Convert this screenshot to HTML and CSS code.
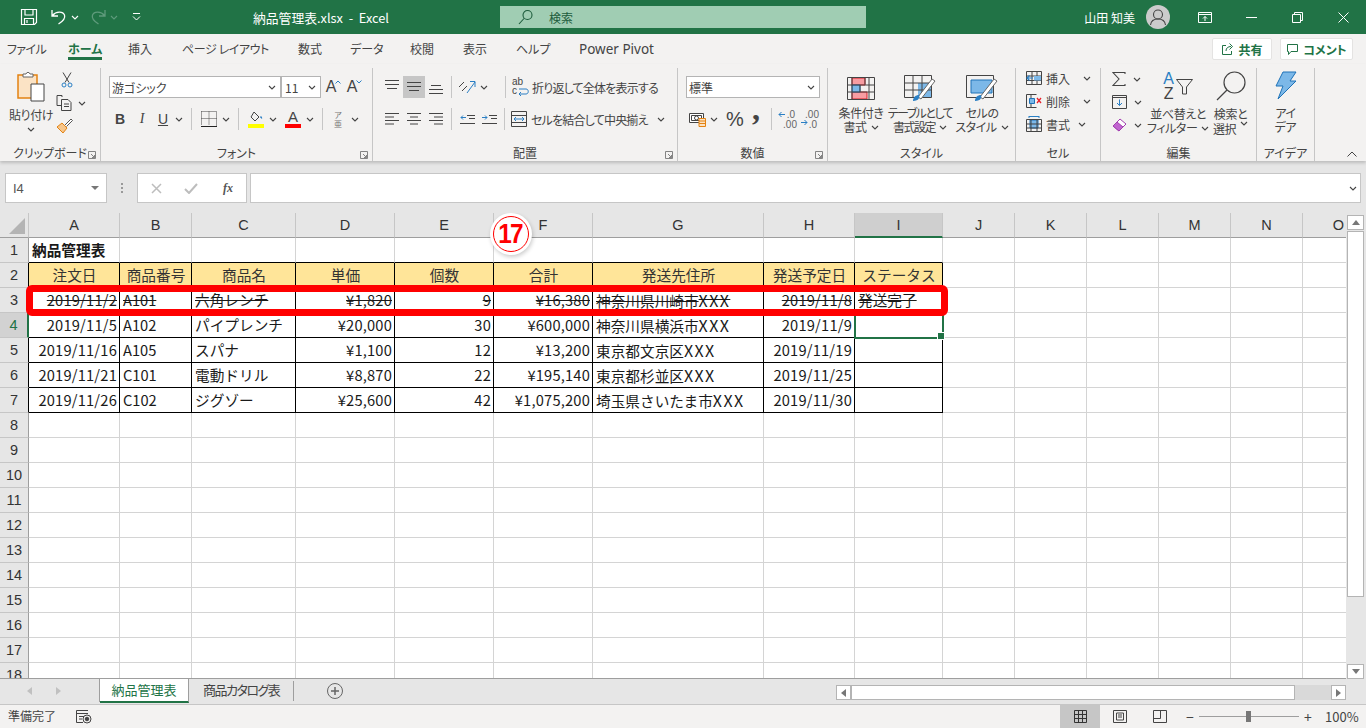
FILE: index.html
```html
<!DOCTYPE html>
<html lang="ja">
<head>
  <meta charset="UTF-8" />
  <title>納品管理表.xlsx - Excel</title>
  <link rel="stylesheet" href="styles.css">
</head>
<body>
  <svg class="sprite" width="0" height="0">
    <symbol id="chev" viewBox="0 0 8 5"><path d="M1 1l3 3 3-3" fill="none" stroke="currentColor" stroke-width="1.1"/></symbol>
    <symbol id="launch" viewBox="0 0 8 8"><path d="M.5 .5h7v7M.5 .5v7h7M3 3l3.500 3.500M6.500 4v2.500H4" fill="none" stroke="#777" stroke-width=".9"/></symbol>
  </svg>

  <header class="titlebar">
    <div class="qat">
      <svg class="q-save" width="18" height="18" viewBox="0 0 18 18" fill="none" stroke="#fff" stroke-width="1.200"><path d="M1.500 1.500h15v13l-2 2h-13zM5 1.500v5.500h8V1.500M4.500 16.500v-6h9v6M7 12v3"/></svg>
      <svg class="q-undo" width="18" height="18" viewBox="0 0 18 18" fill="none" stroke="#fff" stroke-width="1.300"><path d="M2 2v6h6M2.500 7.500C6 3 13 3 14.500 7c1 3-2 6.500-6 9"/></svg>
      <svg class="q-chev" width="8" height="5"><use href="#chev"/></svg>
      <svg class="q-redo" width="18" height="18" viewBox="0 0 18 18" fill="none" stroke="#5f9b7c" stroke-width="1.300"><path d="M16 2v6h-6M15.500 7.500C12 3 5 3 3.500 7c-1 3 2 6.500 6 9"/></svg>
      <svg class="q-chev dim" width="8" height="5"><use href="#chev"/></svg>
      <svg class="q-custom" width="9" height="8" viewBox="0 0 9 8" fill="none" stroke="#fff"><path d="M1 .5h7M1 3.500l3.500 3.500L8 3.500"/></svg>
    </div>
    <div class="doc-title">納品管理表.xlsx &nbsp;-&nbsp; Excel</div>
    <div class="search">
      <svg width="16" height="16" viewBox="0 0 16 16" fill="none" stroke="#1d5c3c" stroke-width="1.100"><circle cx="9.500" cy="6" r="4.500"/><path d="M6 9.500L1 15"/></svg>
      <span>検索</span>
    </div>
    <div class="account">
      <span class="user">山田 知美</span>
      <svg class="avatar" width="24" height="24" viewBox="0 0 24 24"><circle cx="12" cy="12" r="12" fill="#cbcbcb"/><circle cx="12" cy="9.500" r="4.500" fill="none" stroke="#444" stroke-width="1.100"/><path d="M4.500 20c.5-4 3.500-6 7.500-6s7 2 7.500 6" fill="none" stroke="#444" stroke-width="1.100"/></svg>
    </div>
    <div class="winbtns">
      <span class="wb"><svg width="14" height="11" viewBox="0 0 14 11" fill="none" stroke="#fff"><path d="M.5 .5h13v10H.5zM.5 2.500h13M7 9V4.500M5 6.500l2-2 2 2"/></svg></span>
      <span class="wb"><svg width="11" height="1"><rect width="11" height="1" fill="#fff"/></svg></span>
      <span class="wb"><svg width="11" height="11" viewBox="0 0 11 11" fill="none" stroke="#fff"><path d="M.5 2.500h8v8h-8zM2.500 2.500v-2h8v8h-2"/></svg></span>
      <span class="wb"><svg width="11" height="11" viewBox="0 0 11 11" fill="none" stroke="#fff"><path d="M.5 .5l10 10M10.500 .5l-10 10"/></svg></span>
    </div>
  </header>

  <nav class="tabs">
    <a class="t-file">ファイル</a>
    <a class="t-home on">ホーム</a>
    <a class="t-ins">挿入</a>
    <a class="t-page">ページ レイアウト</a>
    <a class="t-form">数式</a>
    <a class="t-data">データ</a>
    <a class="t-rev">校閲</a>
    <a class="t-view">表示</a>
    <a class="t-help">ヘルプ</a>
    <a class="t-pivot">Power Pivot</a>
    <div class="tab-actions">
      <button class="share"><svg width="13" height="13" viewBox="0 0 13 13" fill="none" stroke="#217346"><path d="M5 2.500H1.500v9h9V8M5 8c0-3 2-4.500 5-4.500M8.500 .5l3 3-3 3"/></svg>共有</button>
      <button class="comment"><svg width="13" height="13" viewBox="0 0 13 13" fill="none" stroke="#217346"><path d="M1.500 1.500h10v7H5l-2.500 3v-3h-1z"/></svg>コメント</button>
    </div>
  </nav>

  <div class="ribbon">
    <section class="grp g-clip">
      <div class="body clip">
        <div class="big paste">
          <svg width="28" height="30" viewBox="0 0 28 30"><path d="M1 3h19v23H1z" fill="#fbe3c5" stroke="#e48312" stroke-width="1.500"/><path d="M6 5V2h3l1-1.500h2L13 2h3v3z" fill="#fff" stroke="#666"/><path d="M14 12h13v17H14z" fill="#fff" stroke="#444"/></svg>
          <span>貼り付け</span>
          <svg class="chv" width="8" height="5"><use href="#chev"/></svg>
        </div>
        <div class="clip-tools">
          <svg width="12" height="16" viewBox="0 0 12 16" fill="none" stroke="#444"><path d="M2 .5l6 10M10 .5l-6 10"/><circle cx="3" cy="13" r="2" stroke="#2a7fc4"/><circle cx="9" cy="13" r="2" stroke="#2a7fc4"/></svg>
          <div class="row-tool"><svg width="17" height="16" viewBox="0 0 17 16" fill="none" stroke="#444"><path d="M6 2V.5H1v10h4M5.500 4.500H12l3 3v8H5.500zM8 9h5M8 11.500h5"/></svg><svg class="chv" width="8" height="5"><use href="#chev"/></svg></div>
          <svg width="17" height="16" viewBox="0 0 17 16"><path d="M1 9l6 6 4-5-5-5z" fill="#f6c68c" stroke="#e48312"/><path d="M9 7l6-6 1.500 1.500-6 6" fill="#fff" stroke="#555"/></svg>
        </div>
      </div>
      <div class="glabel">クリップボード</div>
      <svg class="launch" width="8" height="8"><use href="#launch"/></svg>
    </section>

    <section class="grp g-font">
      <div class="body col">
        <div class="trow">
          <div class="select font-name">游ゴシック<svg width="8" height="5"><use href="#chev"/></svg></div>
          <div class="select font-size">11<svg width="8" height="5"><use href="#chev"/></svg></div>
          <span class="grow">A<svg width="6" height="4" viewBox="0 0 6 4" fill="none" stroke="#2a7fc4"><path d="M.5 3.500L3 1l2.500 2.500"/></svg></span>
          <span class="grow">A<svg width="6" height="4" viewBox="0 0 6 4" fill="none" stroke="#2a7fc4"><path d="M.5 .5L3 3l2.500-2.500"/></svg></span>
        </div>
        <div class="trow">
          <span class="tb"><b class="fb">B</b></span>
          <span class="tb"><i class="fi">I</i></span>
          <span class="tb nw"><u class="fu">U</u></span>
          <svg class="cv" width="8" height="5"><use href="#chev"/></svg>
          <span class="sep"></span>
          <span class="tb bump2"><svg width="16" height="16" viewBox="0 0 16 16" fill="none"><path d="M.5 .5h15v14M.5 .5v14M8 .5v14M.5 7.500h15" stroke="#444" stroke-dasharray="1 1"/><path d="M0 15.500h16" stroke="#222"/></svg></span>
          <svg class="cv" width="8" height="5"><use href="#chev"/></svg>
          <span class="sep"></span>
          <span class="tb bump2"><svg width="16" height="17" viewBox="0 0 16 17" fill="none"><path d="M6 1l5 5-4 4-4-4z" stroke="#444"/><path d="M13 5c1 1 1.500 2 1 3-.5-1-2-1-2-2" fill="#2a7fc4"/><rect y="13" width="16" height="4" fill="#ff0"/></svg></span>
          <svg class="cv" width="8" height="5"><use href="#chev"/></svg>
          <span class="tb color bump1"><span class="fa">A</span><em></em></span>
          <svg class="cv" width="8" height="5"><use href="#chev"/></svg>
          <span class="sep"></span>
          <span class="tb"><span class="phon">ア<br>亜</span></span>
          <svg class="cv" width="8" height="5"><use href="#chev"/></svg>
        </div>
      </div>
      <div class="glabel">フォント</div>
      <svg class="launch" width="8" height="8"><use href="#launch"/></svg>
    </section>

    <section class="grp g-align">
      <div class="body col">
        <div class="trow">
          <span class="tb"><svg width="14" height="14" viewBox="0 0 14 14" stroke="#444"><path d="M0 .5h14M0 4.500h14M2 8.500h10"/></svg></span>
          <span class="tb act"><svg width="14" height="14" viewBox="0 0 14 14" stroke="#444"><path d="M0 2.500h14M0 6.500h14M2 10.500h10"/></svg></span>
          <span class="tb"><svg width="14" height="14" viewBox="0 0 14 14" stroke="#444"><path d="M2 5.500h10M0 9.500h14M0 13.500h14"/></svg></span>
          <span class="sep"></span>
          <span class="tb"><svg width="18" height="16" viewBox="0 0 18 16" fill="none"><path d="M1 8l5-5M4 12l5-5" stroke="#444"/><path d="M9 14L17 3M12 2.500h5V8" stroke="#2a7fc4"/></svg></span>
          <svg class="cv" width="8" height="5"><use href="#chev"/></svg>
          <span class="sep far"></span>
          <span class="wide"><svg width="20" height="20" viewBox="0 0 20 20" fill="none"><text x="2" y="8" font-size="10" fill="#444" font-family="Liberation Sans">ab</text><text x="2" y="17" font-size="10" fill="#444" font-family="Liberation Sans">c</text><path d="M9 12h7c3 0 3 5 0 5H9M11 15l-2 2 2 2" stroke="#2a7fc4"/></svg></span>
          <span class="cmd">折り返して全体を表示する</span>
        </div>
        <div class="trow">
          <span class="tb"><svg width="14" height="12" viewBox="0 0 14 12" stroke="#444"><path d="M0 .5h14M0 4h9M0 7.500h14M0 11h9"/></svg></span>
          <span class="tb"><svg width="14" height="12" viewBox="0 0 14 12" stroke="#444"><path d="M0 .5h14M3 4h8M0 7.500h14M3 11h8"/></svg></span>
          <span class="tb"><svg width="14" height="12" viewBox="0 0 14 12" stroke="#444"><path d="M0 .5h14M5 4h9M0 7.500h14M5 11h9"/></svg></span>
          <span class="sep"></span>
          <span class="tb"><svg width="15" height="12" viewBox="0 0 15 12" fill="none"><path d="M7 2.500h8M9 5.500h6M0 10.500h15" stroke="#444"/><path d="M6 4.500H1M3 2.500l-2 2 2 2" stroke="#2a7fc4"/></svg></span>
          <span class="tb"><svg width="15" height="12" viewBox="0 0 15 12" fill="none"><path d="M7 2.500h8M9 5.500h6M0 10.500h15" stroke="#444"/><path d="M0 4.500h5M3 2.500l2 2-2 2" stroke="#2a7fc4"/></svg></span>
          <span class="sep"></span>
          <span class="wide merge"><svg width="16" height="16" viewBox="0 0 16 16" fill="none"><path d="M.5 .5h15v15H.5zM.5 4.500h15M.5 11.500h15" stroke="#444"/><path d="M3 8h10M5 6L3 8l2 2M11 6l2 2-2 2" stroke="#2a7fc4"/></svg></span>
          <span class="cmd">セルを結合して中央揃え</span>
          <svg class="cv merge-cv" width="8" height="5"><use href="#chev"/></svg>
        </div>
      </div>
      <div class="glabel">配置</div>
      <svg class="launch" width="8" height="8"><use href="#launch"/></svg>
    </section>

    <section class="grp g-num">
      <div class="body col">
        <div class="trow">
          <div class="select num-format">標準<svg width="8" height="5"><use href="#chev"/></svg></div>
        </div>
        <div class="trow">
          <span class="tb"><svg width="17" height="15" viewBox="0 0 17 15"><path d="M.5 1.500h14v9H.5zM2.500 3.500h10v5h-10z" fill="#fff" stroke="#444"/><circle cx="7.500" cy="6" r="2" fill="none" stroke="#444"/><path d="M10 6.500h6.500v8H10z" fill="#fbe3c5" stroke="#e48312"/><path d="M10 9h6.500M10 11.500h6.500" stroke="#e48312"/></svg></span>
          <svg class="cv" width="8" height="5"><use href="#chev"/></svg>
          <span class="pct">%</span>
          <span class="comma">,</span>
          <span class="sep"></span>
          <span class="tb dec"><svg width="18" height="16" viewBox="0 0 18 16" fill="none"><path d="M7 3.500H1M3.500 1L1 3.500 3.500 6" stroke="#2a7fc4"/></svg><small class="d1">.0</small><small class="d2">.00</small></span>
          <span class="tb dec"><svg width="18" height="16" viewBox="0 0 18 16" fill="none"><path d="M1 11.500h6M4.500 9L7 11.500 4.500 14" stroke="#2a7fc4"/></svg><small class="d3">.00</small><small class="d4">.0</small></span>
        </div>
      </div>
      <div class="glabel">数値</div>
      <svg class="launch" width="8" height="8"><use href="#launch"/></svg>
    </section>

    <section class="grp g-style">
      <div class="body styles">
        <div class="big s1">
          <svg width="28" height="23" viewBox="0 0 28 23"><path d="M5 1h13v7H5zM5 15h15v7H5z" fill="#f79da2" stroke="#d9202a"/><path d="M5 8h8v7H5z" fill="#7cb8e8" stroke="#1e72b8"/><path d="M.5 .5h27v22H.5zM.5 8h27M.5 15h27M5 .5v22M13 8v7M18 .5v7M22 .5v22" fill="none" stroke="#444"/></svg>
          <span>条件付き<br>書式<svg class="chv-in" width="8" height="5"><use href="#chev"/></svg></span>
        </div>
        <div class="big s2">
          <svg width="32" height="27" viewBox="0 0 32 27"><path d="M14 8h14v14H14z" fill="#7cb8e8"/><path d="M.5 .5h27v22H.5zM.5 8h27M.5 15h27M9 .5v22M18 .5v22" fill="none" stroke="#444"/><path d="M14 22l14-18 3 2-14 18z" fill="#fff" stroke="#666"/><path d="M9 26c0-4 3-6 6-6 1 2 0 6-6 6z" fill="#2a7fc4"/></svg>
          <span class="tight">テーブルとして<br>書式設定<svg class="chv-in" width="8" height="5"><use href="#chev"/></svg></span>
        </div>
        <div class="big s3">
          <svg width="32" height="27" viewBox="0 0 32 27"><path d="M5 5h21v13H5z" fill="#7cb8e8" stroke="#1e72b8"/><path d="M.5 .5h27v22H.5z" fill="none" stroke="#444"/><path d="M14 22l14-18 3 2-14 18z" fill="#fff" stroke="#666"/><path d="M9 26c0-4 3-6 6-6 1 2 0 6-6 6z" fill="#2a7fc4"/></svg>
          <span>セルの<br>スタイル<svg class="chv-in" width="8" height="5"><use href="#chev"/></svg></span>
        </div>
      </div>
      <div class="glabel">スタイル</div>
    </section>

    <section class="grp g-cell">
      <div class="body col cells">
        <div class="cellrow"><svg width="16" height="14" viewBox="0 0 16 14"><path d="M.5 .5h15v13H.5zM.5 5h15M.5 9.500h15M6 .5v13M11 .5v13" fill="none" stroke="#444"/><path d="M8 5h7v4.500H8z" fill="#7cb8e8"/><path d="M7 7H1M3.500 4.500L1 7l2.500 2.500" fill="none" stroke="#2a7fc4" stroke-width="1.200"/></svg><span>挿入</span><svg class="cv c-end" width="8" height="5"><use href="#chev"/></svg></div>
        <div class="cellrow"><svg width="16" height="14" viewBox="0 0 16 14"><path d="M.5 .5h10M.5 13.500h10M.5 .5v13M5 .5v4M5 9v4.500" fill="none" stroke="#444"/><path d="M3.500 4.500h5v5h-5z" fill="#7cb8e8" stroke="#1e72b8"/><path d="M11 4l4 5M15 4l-4 5" stroke="#e8202a" stroke-width="1.300"/></svg><span>削除</span><svg class="cv c-end" width="8" height="5"><use href="#chev"/></svg></div>
        <div class="cellrow"><svg width="16" height="16" viewBox="0 0 16 16"><path d="M4 4h8v8H4z" fill="#7cb8e8" stroke="#1e72b8"/><path d="M.5 3.500h15v12H.5zM.5 8h15M.5 12h15M5 3.500v12M11 3.500v12" fill="none" stroke="#444"/><path d="M3 .5h10M3 0v2M13 0v2" stroke="#2a7fc4"/></svg><span>書式</span><svg class="cv c-end2" width="8" height="5"><use href="#chev"/></svg></div>
      </div>
      <div class="glabel">セル</div>
    </section>

    <section class="grp g-edit">
      <div class="body editing">
        <div class="col edit-tools">
          <div class="etool"><svg width="14" height="14" viewBox="0 0 14 14" fill="none" stroke="#444" stroke-width="1.100"><path d="M13 2V.5H1l6 6.500-6 6.500h12V12"/></svg><svg class="cv" width="8" height="5"><use href="#chev"/></svg></div>
          <div class="etool"><svg width="15" height="14" viewBox="0 0 15 14" fill="none"><path d="M.5 .5h14v13H.5zM.5 2.500h14" stroke="#444"/><path d="M7.500 4.500v6M5 8l2.500 2.500L10 8" stroke="#2a7fc4"/></svg><svg class="cv" width="8" height="5"><use href="#chev"/></svg></div>
          <div class="etool"><svg width="15" height="14" viewBox="0 0 15 14"><path d="M1 8l7-7 6 5-7 7z" fill="#fff" stroke="#a23fb0"/><path d="M1 8l4-4 6 5-4 4z" fill="#c065cf" stroke="#a23fb0"/></svg><svg class="cv" width="8" height="5"><use href="#chev"/></svg></div>
        </div>
        <div class="big sort">
          <div class="sort-ic"><div class="az"><em>A</em><b>Z</b></div><svg width="17" height="16" viewBox="0 0 17 16" fill="none" stroke="#444"><path d="M.5 .5h16L10.500 8v7h-4V8z"/></svg></div>
          <span>並べ替えと<br>フィルター<svg class="chv-in" width="8" height="5"><use href="#chev"/></svg></span>
        </div>
        <div class="big find">
          <svg width="30" height="30" viewBox="0 0 30 30" fill="none" stroke="#444" stroke-width="1.200"><circle cx="18.500" cy="11.500" r="10.500"/><path d="M11 19L1 29"/></svg>
          <span>検索と<br>選択<svg class="chv-in" width="8" height="5"><use href="#chev"/></svg></span>
        </div>
      </div>
      <div class="glabel">編集</div>
    </section>

    <section class="grp g-idea">
      <div class="body">
        <div class="big">
          <svg width="22" height="29" viewBox="0 0 22 29"><path d="M8 1h13l-6 9h6L3 28l5-13H1z" fill="#7cb8e8" stroke="#1e72b8"/></svg>
          <span>アイ<br>デア</span>
        </div>
      </div>
      <div class="glabel">アイデア</div>
    </section>

    <svg class="collapse" width="10" height="6" viewBox="0 0 10 6" fill="none" stroke="#444"><path d="M.5 5.500L5 1l4.500 4.500"/></svg>
  </div>

  <div class="fbar">
    <div class="namebox">I4<span class="tri"></span></div>
    <span class="dots"></span>
    <div class="fbtns">
      <svg width="11" height="11" viewBox="0 0 11 11" stroke="#bdbdbd" stroke-width="1.500"><path d="M1 1l9 9M10 1l-9 9"/></svg>
      <svg width="14" height="11" viewBox="0 0 14 11" fill="none" stroke="#bdbdbd" stroke-width="2"><path d="M1 6l4 4 8-9"/></svg>
      <i class="fx">fx</i>
    </div>
    <div class="finput"><svg width="8" height="5"><use href="#chev"/></svg></div>
  </div>

  <main class="sheetarea">
    <div class="sheet">
      <table class="cells-table">
        <colgroup>
          <col class="c-h"><col class="c-a"><col class="c-b"><col class="c-c"><col class="c-d"><col class="c-e"><col class="c-f"><col class="c-g"><col class="c-hh"><col class="c-i"><col class="c-n"><col class="c-n"><col class="c-n"><col class="c-n"><col class="c-n"><col class="c-n">
        </colgroup>
        <tr class="colhead">
          <th class="corner"><span></span></th><th>A</th><th>B</th><th>C</th><th>D</th><th>E</th><th>F</th><th>G</th><th>H</th><th class="cur">I</th><th>J</th><th>K</th><th>L</th><th>M</th><th>N</th><th>O</th>
        </tr>
        <tr class="above">
          <th>1</th><td class="title">納品管理表</td><td></td><td></td><td></td><td></td><td></td><td></td><td></td><td></td><td class="free"></td><td class="free"></td><td class="free"></td><td class="free"></td><td class="free"></td><td class="free"></td>
        </tr>
        <tr class="ledger heads">
          <th>2</th><td>注文日</td><td>商品番号</td><td>商品名</td><td>単価</td><td>個数</td><td>合計</td><td>発送先住所</td><td>発送予定日</td><td>ステータス</td><td class="free"></td><td class="free"></td><td class="free"></td><td class="free"></td><td class="free"></td><td class="free"></td>
        </tr>
        <tr class="ledger done">
          <th>3</th><td class="r"><s>2019/11/2</s></td><td><s>A101</s></td><td><s>六角レンチ</s></td><td class="r"><s>¥1,820</s></td><td class="r"><s>9</s></td><td class="r"><s>¥16,380</s></td><td><s>神奈川県川崎市<span class="xs">XXX</span></s></td><td class="r"><s>2019/11/8</s></td><td><s>発送完了</s></td><td class="free"></td><td class="free"></td><td class="free"></td><td class="free"></td><td class="free"></td><td class="free"></td>
        </tr>
        <tr class="ledger">
          <th class="cur">4</th><td class="r">2019/11/5</td><td>A102</td><td>パイプレンチ</td><td class="r">¥20,000</td><td class="r">30</td><td class="r">¥600,000</td><td>神奈川県横浜市<span class="xs">XXX</span></td><td class="r">2019/11/9</td><td class="sel"></td><td class="free"></td><td class="free"></td><td class="free"></td><td class="free"></td><td class="free"></td><td class="free"></td>
        </tr>
        <tr class="ledger">
          <th>5</th><td class="r">2019/11/16</td><td>A105</td><td>スパナ</td><td class="r">¥1,100</td><td class="r">12</td><td class="r">¥13,200</td><td>東京都文京区<span class="xs">XXX</span></td><td class="r">2019/11/19</td><td></td><td class="free"></td><td class="free"></td><td class="free"></td><td class="free"></td><td class="free"></td><td class="free"></td>
        </tr>
        <tr class="ledger">
          <th>6</th><td class="r">2019/11/21</td><td>C101</td><td>電動ドリル</td><td class="r">¥8,870</td><td class="r">22</td><td class="r">¥195,140</td><td>東京都杉並区<span class="xs">XXX</span></td><td class="r">2019/11/25</td><td></td><td class="free"></td><td class="free"></td><td class="free"></td><td class="free"></td><td class="free"></td><td class="free"></td>
        </tr>
        <tr class="ledger">
          <th>7</th><td class="r">2019/11/26</td><td>C102</td><td>ジグゾー</td><td class="r">¥25,600</td><td class="r">42</td><td class="r">¥1,075,200</td><td>埼玉県さいたま市<span class="xs">XXX</span></td><td class="r">2019/11/30</td><td></td><td class="free"></td><td class="free"></td><td class="free"></td><td class="free"></td><td class="free"></td><td class="free"></td>
        </tr>
        <tr><th>8</th><td></td><td></td><td></td><td></td><td></td><td></td><td></td><td></td><td></td><td></td><td></td><td></td><td></td><td></td><td></td></tr>
        <tr><th>9</th><td></td><td></td><td></td><td></td><td></td><td></td><td></td><td></td><td></td><td></td><td></td><td></td><td></td><td></td><td></td></tr>
        <tr><th>10</th><td></td><td></td><td></td><td></td><td></td><td></td><td></td><td></td><td></td><td></td><td></td><td></td><td></td><td></td><td></td></tr>
        <tr><th>11</th><td></td><td></td><td></td><td></td><td></td><td></td><td></td><td></td><td></td><td></td><td></td><td></td><td></td><td></td><td></td></tr>
        <tr><th>12</th><td></td><td></td><td></td><td></td><td></td><td></td><td></td><td></td><td></td><td></td><td></td><td></td><td></td><td></td><td></td></tr>
        <tr><th>13</th><td></td><td></td><td></td><td></td><td></td><td></td><td></td><td></td><td></td><td></td><td></td><td></td><td></td><td></td><td></td></tr>
        <tr><th>14</th><td></td><td></td><td></td><td></td><td></td><td></td><td></td><td></td><td></td><td></td><td></td><td></td><td></td><td></td><td></td></tr>
        <tr><th>15</th><td></td><td></td><td></td><td></td><td></td><td></td><td></td><td></td><td></td><td></td><td></td><td></td><td></td><td></td><td></td></tr>
        <tr><th>16</th><td></td><td></td><td></td><td></td><td></td><td></td><td></td><td></td><td></td><td></td><td></td><td></td><td></td><td></td><td></td></tr>
        <tr><th>17</th><td></td><td></td><td></td><td></td><td></td><td></td><td></td><td></td><td></td><td></td><td></td><td></td><td></td><td></td><td></td></tr>
        <tr><th>18</th><td></td><td></td><td></td><td></td><td></td><td></td><td></td><td></td><td></td><td></td><td></td><td></td><td></td><td></td><td></td></tr>
      </table>
      <div class="callout-frame"></div>
      <div class="callout-num"><span>17</span></div>
    </div>
    <div class="vscroll">
      <span class="sb-btn"><span class="up"></span></span>
      <span class="vthumb"></span>
      <span class="sb-btn"><span class="down"></span></span>
    </div>
  </main>

  <div class="sheetbar">
    <div class="sheet-nav"><span class="lt"></span><span class="rt"></span></div>
    <div class="stab on">納品管理表</div>
    <div class="stab next">商品カタログ表</div>
    <span class="stab-sep"></span>
    <svg class="addsheet" width="16" height="16" viewBox="0 0 16 16" fill="none" stroke="#666"><circle cx="8" cy="8" r="7.500"/><path d="M8 4v8M4 8h8" stroke-width="1.500"/></svg>
    <div class="hscroll">
      <span class="grip"></span>
      <span class="sb-btn"><span class="lt dark"></span></span>
      <span class="hthumb"></span>
      <span class="sb-btn"><span class="rt dark"></span></span>
    </div>
  </div>

  <footer class="status">
    <span>準備完了</span>
    <svg class="macro" width="16" height="14" viewBox="0 0 16 14" fill="none" stroke="#444"><path d="M12 .5H.5v12H7M.5 3.500H12M3 6.500h5M3 9h3"/><circle cx="11" cy="9" r="4"/><circle cx="11" cy="9" r="1.800" fill="#444"/></svg>
    <div class="views">
      <span class="view act"><svg width="13" height="13" viewBox="0 0 13 13" fill="none" stroke="#333"><path d="M.5 .5h12v12H.5zM.5 4.500h12M.5 8.500h12M4.500 .5v12M8.500 .5v12"/></svg></span>
      <span class="view"><svg width="14" height="13" viewBox="0 0 14 13" fill="none" stroke="#444"><path d="M.5 .5h13v12H.5zM3.500 3h7v7h-7zM5 5h4M5 7h4"/></svg></span>
      <span class="view"><svg width="14" height="13" viewBox="0 0 14 13" fill="none" stroke="#444"><path d="M.5 .5h13v12H.5zM.5 8.500h7V.5"/></svg></span>
    </div>
    <div class="zoom">
      <span class="zm">−</span>
      <span class="slider"><span></span></span>
      <span class="zm">+</span>
      <span class="pctv">100%</span>
    </div>
  </footer>
</body>
</html>
```

FILE: styles.css
```css
* { box-sizing: border-box; }
html, body { margin: 0; height: 100%; }
body {
  width: 1366px;
  height: 728px;
  overflow: hidden;
  display: flex;
  flex-direction: column;
  font-family: "Noto Sans CJK JP", "Noto Sans", sans-serif;
  font-feature-settings: "palt";
  font-size: 12px;
  color: #444;
  background: #e6e6e6;
}
.sprite { position: absolute; }

/* title bar */
.titlebar {
  height: 34px;
  flex: none;
  display: flex;
  align-items: center;
  background: #217346;
  color: #fff;
}
.qat { width: 253px; flex: none; display: flex; align-items: center; padding-left: 20px; }
.q-undo { margin-left: 12px; }
.q-chev { margin-left: 3px; }
.q-chev.dim { color: #5f9b7c; }
.q-redo { margin-left: 10px; }
.q-custom { margin-left: 14px; }
.doc-title { width: 247px; flex: none; font-size: 12.800px; }
.search {
  width: 366px;
  height: 22px;
  flex: none;
  display: flex;
  align-items: center;
  gap: 15px;
  padding-left: 18px;
  background: #a0cdb3;
  color: #1d5c3c;
}
.account { display: flex; align-items: center; margin-left: auto; }
.user { margin-right: 11px; }
.avatar { margin-right: 12px; }
.winbtns { display: flex; }
.wb { width: 46px; display: flex; align-items: center; justify-content: center; }

/* tabs */
.tabs {
  height: 30px;
  flex: none;
  display: flex;
  align-items: center;
  padding: 0 13px 0 7px;
  background: #f3f2f1;
  color: #444;
  font-size: 12px;
}
.tabs a { position: relative; white-space: nowrap; margin-top: -1px; }
.t-file { letter-spacing: -.6px; width: 61px; }
.t-home { width: 34px; margin-right: 26px; }
.t-ins { width: 54px; }
.t-page { width: 116px; letter-spacing: -.4px; }
.t-form { width: 52px; }
.t-data { width: 60px; }
.t-rev { width: 53px; }
.t-view { width: 53px; }
.t-help { width: 63px; }
.t-pivot { font-size: 13.500px; font-family: "Noto Sans", sans-serif; }
.tabs a.on { color: #217346; font-weight: 700; }
.tabs a.on::after {
  content: "";
  position: absolute;
  left: 0;
  right: 0;
  bottom: -3px;
  height: 3px;
  background: #217346;
}
.tab-actions { margin-left: auto; display: flex; gap: 8px; }
.tab-actions button {
  height: 22px;
  display: flex;
  align-items: center;
  justify-content: center;
  gap: 4px;
  border: 1px solid #e4e3e2;
  border-radius: 2px;
  background: #fff;
  color: #217346;
  font: 700 12px "Noto Sans CJK JP", sans-serif;
  font-feature-settings: "palt";
  padding: 0;
}
.share { width: 60px; }
.comment { width: 73px; }

/* ribbon */
.ribbon {
  height: 97px;
  flex: none;
  position: relative;
  z-index: 2;
  display: flex;
  background: #f3f2f1;
  box-shadow: 0 2px 3px rgba(0, 0, 0, 0.18);
}
.grp {
  flex: none;
  position: relative;
  display: flex;
  flex-direction: column;
  border-right: 1px solid #c6c6c6;
  height: 93px;
  margin-top: 4px;
}
.g-clip { width: 101px; }
.g-font { width: 272px; }
.g-align { width: 305px; }
.g-num { width: 150px; }
.g-style { width: 188px; }
.g-cell { width: 85px; }
.g-edit { width: 156px; }
.g-idea { width: 58px; }
.body { flex: 1; min-height: 0; }
.glabel { height: 16px; line-height: 15px; text-align: center; font-size: 12px; white-space: nowrap; }
.launch { position: absolute; right: 4px; bottom: 2px; }
.col { display: flex; flex-direction: column; }
.trow { display: flex; align-items: center; height: 22px; }
.g-font .body, .g-align .body, .g-num .body { padding: 8px 0 0 8px; gap: 10px; }
.tb { width: 22px; height: 22px; flex: none; display: flex; align-items: center; justify-content: center; position: relative; }
.tb.act { background: #c6c6c6; }
.tb.nw { width: 20px; }
.bump2 { margin-left: 2px; }
.bump1 { margin-left: 1px; }
.cv { flex: none; width: 8px; height: 5px; margin: 0 4px 0 2px; }
.sep { width: 1px; height: 22px; flex: none; background: #c6c6c6; margin: 0 4px; }
.sep.far { margin-left: 13px; }
.select {
  height: 22px;
  display: flex;
  align-items: center;
  justify-content: space-between;
  padding: 0 4px 0 2px;
  border: 1px solid #b4b4b4;
  background: #fff;
  color: #444;
}
.font-name { width: 172px; }
.font-size { width: 40px; margin-right: 0; padding-left: 3px; }
.num-format { width: 134px; }
.grow { position: relative; width: 22px; text-align: center; font: 16px/22px "Liberation Sans", sans-serif; margin-left: -1px; }
.grow svg { position: absolute; top: 4px; right: 1px; }
.fb { font: 700 14px "Liberation Sans", sans-serif; }
.fi { font: italic 14px "Liberation Serif", serif; }
.fu { font: 14px "Liberation Sans", sans-serif; }
.fa { font: 15px/15px "Liberation Sans", sans-serif; margin-top: -5px; }
.color em { position: absolute; left: 3px; right: 3px; bottom: 2px; height: 4px; background: #f00; }
.phon { font-size: 8px; line-height: 9px; text-align: center; color: #777; }
.cmd { white-space: nowrap; letter-spacing: -.8px; }
.wide { width: 20px; flex: none; display: flex; margin-right: 2px; }
.wide.merge { padding-left: 2px; }
.merge-cv { margin-left: 9px; }
.pct { width: 20px; font: 20px "Liberation Sans", sans-serif; text-align: center; margin-left: 3px; }
.comma { width: 20px; height: 22px; margin: 0 1px; font: 700 32px/2px "Liberation Serif", serif; text-align: center; }
.dec small { position: absolute; font: 10px "Liberation Sans", sans-serif; color: #666; }
.d1 { right: 3px; top: 1px; }
.d2 { right: 1px; bottom: 0; }
.d3 { right: 1px; top: 1px; }
.d4 { right: 3px; bottom: 0; }

.big {
  display: flex;
  flex-direction: column;
  align-items: center;
  text-align: center;
  line-height: 14px;
  white-space: nowrap;
}
.big span { display: block; letter-spacing: -.4px; }
.big span.tight { letter-spacing: -1.500px; }
.chv { width: 8px; height: 5px; }
.chv-in { width: 8px; height: 5px; margin-left: 4px; vertical-align: 2px; }
.clip { display: flex; padding: 4px 0 0 10px; }
.paste { width: 42px; }
.paste span { margin-top: 6px; }
.paste .chv { margin-top: 5px; }
.clip-tools { margin-left: 7px; padding-top: 0; display: flex; flex-direction: column; gap: 7px; align-items: flex-start; }
.row-tool { display: flex; align-items: center; gap: 5px; margin-left: -3px; }
.clip-tools > svg:first-child { margin-left: 2px; }
.clip-tools > svg:last-child { margin-left: -3px; }

.styles { display: flex; gap: 4px; padding: 7px 0 0 10px; }
.styles .big { height: 70px; justify-content: flex-start; }
.s1 { width: 46px; }
.s2 { width: 64px; }
.s3 { width: 52px; }
.styles .big svg:first-child { height: 27px; margin-bottom: 4px; }
.cells { padding: 1px 0 0 10px; gap: 5px; }
.cellrow { display: flex; align-items: center; height: 18px; gap: 4px; }
.cellrow .cv { margin-left: 9px; }
.cellrow .c-end2 { margin-left: 4px; }
.editing { display: flex; padding: 3px 0 0 11px; }
.edit-tools { width: 40px; gap: 7px; }
.etool { display: flex; align-items: center; gap: 5px; height: 16px; }
.sort { width: 54px; }
.find { width: 52px; }
.sort-ic { display: flex; align-items: flex-start; height: 33px; margin-bottom: 3px; gap: 2px; }
.az { display: flex; flex-direction: column; font: 16px/15px "Liberation Sans", sans-serif; }
.az em { font-style: normal; color: #2a7fc4; }
.az b { font-weight: 400; }
.sort-ic svg { margin-top: 8px; }
.find svg { margin-bottom: 6px; }
.g-idea .body { display: flex; justify-content: center; padding-top: 3px; }
.g-idea .big svg { margin-bottom: 6px; }
.collapse { position: absolute; right: 9px; bottom: 4px; }

/* formula bar */
.fbar {
  height: 52px;
  flex: none;
  display: flex;
  align-items: flex-start;
  padding: 12px 5px 0;
  background: #e6e6e6;
}
.namebox, .fbtns, .finput { height: 30px; background: #fff; border: 1px solid #c6c6c6; }
.namebox { width: 102px; display: flex; align-items: center; justify-content: space-between; padding: 0 7px; font: 13px "Liberation Sans", sans-serif; color: #555; }
.tri { border: 4px solid transparent; border-top: 4px solid #777; border-bottom: 0; }
.dots { width: 2px; height: 10px; margin: 10px 14px 0 14px; background: repeating-linear-gradient(#999 0 2px, transparent 2px 4px); }
.fbtns { width: 110px; display: flex; align-items: center; gap: 22px; padding-left: 13px; margin-right: 3px; }
.fx { font: italic 700 12px "Liberation Serif", serif; color: #555; margin-left: 3px; }
.finput { flex: 1; display: flex; align-items: center; justify-content: flex-end; padding-right: 3px; }

/* sheet */
.sheetarea { height: 466px; flex: none; display: flex; }
.sheet { width: 1346px; flex: none; position: relative; overflow: hidden; background: #fff; border-bottom: 1px solid #9e9e9e; }
.cells-table { table-layout: fixed; width: 1375px; border-collapse: separate; border-spacing: 0; font-size: 14.670px; color: #1a1a1a; font-feature-settings: normal; }
.c-h { width: 29px; }
.c-a { width: 91px; }
.c-b { width: 72px; }
.c-c { width: 104px; }
.c-d, .c-e, .c-f { width: 99px; }
.c-g { width: 171px; }
.c-hh { width: 91px; }
.c-i { width: 88px; }
.c-n { width: 72px; }
tr { height: 25px; }
td, th { padding: 0; overflow: hidden; white-space: nowrap; font-weight: 400; }
td { padding: 0 2px 0 3px; border-right: 1px solid #d4d4d4; border-bottom: 1px solid #d4d4d4; line-height: 22px; }
th { background: #e6e6e6; border-right: 1px solid #9e9e9e; border-bottom: 1px solid #c6c6c6; color: #333; font: 14.500px "Liberation Sans", sans-serif; }
.colhead th { border-right-color: #c6c6c6; border-bottom-color: #9e9e9e; }
.corner { position: relative; }
.corner span { position: absolute; right: 3px; bottom: 3px; border: 8px solid transparent; border-right-color: #b4b4b4; border-bottom-color: #b4b4b4; }
.title { font-weight: 700; }
.above td { border-bottom-color: #000; }
.above td.free { border-bottom-color: #d4d4d4; }
.ledger td { border-color: #000; }
.ledger td.free { border-color: #d4d4d4; }
.ledger th { border-right-color: #000; }
.heads td { background: #ffe599; text-align: center; color: #333; }
.heads td.free { background: #fff; }
.r { text-align: right; letter-spacing: .2px; }
.xs { font-size: 16px; letter-spacing: 1.400px; }
th.cur { background: #d2d2d2; color: #217346; border-right: 2px solid #217346; }
.ledger th.cur { border-right-color: #217346; }
.colhead th.cur { background: #cfcfcf; color: #333; border-right: 1px solid #c6c6c6; border-bottom: 2px solid #217346; }
.sel { position: relative; overflow: visible; outline: 2px solid #217346; outline-offset: -1px; }
.sel::after { content: ""; position: absolute; right: -3px; bottom: -3px; width: 6px; height: 6px; background: #217346; border: 1px solid #fff; }
s { text-decoration-thickness: 1px; }

/* callouts over the grid */
.callout-frame {
  position: absolute;
  left: 26px;
  top: 72px;
  width: 922px;
  height: 31px;
  border: 7px solid #f00;
  border-radius: 6px;
}
.callout-num {
  position: absolute;
  left: 493px;
  top: 3px;
  width: 36px;
  height: 36px;
  display: flex;
  align-items: center;
  justify-content: center;
  border-radius: 50%;
  background: #fff;
  box-shadow: 0 0 0 3px #fff, 1px 2px 4px 3px rgba(0, 0, 0, 0.2);
  border: 1.500px solid #f00;
  color: #f00;
}
.callout-num span { font: 700 27px/1 "Liberation Sans", sans-serif; letter-spacing: -2px; transform: scaleX(.9); margin-left: -2px; }

/* scrollbars */
.vscroll { width: 20px; flex: none; display: flex; flex-direction: column; padding: 2px 2px 0 1px; background: #e6e6e6; }
.sb-btn { width: 15px; height: 15px; flex: none; display: flex; align-items: center; justify-content: center; background: #fff; border: 1px solid #b4b4b4; }
.vscroll .sb-btn { width: 17px; }
.vthumb { height: 366px; margin: 1px 0 0; flex: none; background: #fff; border: 1px solid #b4b4b4; }
.vscroll .sb-btn:last-child { margin-top: auto; }
.up { border: 4px solid transparent; border-bottom: 5px solid #777; border-top: 0; }
.down { border: 4px solid transparent; border-top: 5px solid #777; border-bottom: 0; }
.lt { border: 4px solid transparent; border-right: 5px solid #c0c0c0; border-left: 0; }
.rt { border: 4px solid transparent; border-left: 5px solid #c0c0c0; border-right: 0; }
.lt.dark { border-right-color: #777; }
.rt.dark { border-left-color: #777; }

/* sheet tabs */
.sheetbar { height: 26px; flex: none; display: flex; align-items: flex-start; padding-right: 20px; background: #e6e6e6; border-bottom: 1px solid #c6c6c6; }
.sheet-nav { width: 100px; height: 23px; display: flex; align-items: center; gap: 24px; padding-left: 27px; border-right: 1px solid #9e9e9e; }
.stab { height: 24px; line-height: 22px; padding: 0 14px; color: #444; font-size: 13px; }
.stab.next { letter-spacing: -1.500px; }
.stab.on { width: 89px; padding: 0; text-align: center; background: #fff; color: #217346; border-right: 1px solid #9e9e9e; border-bottom: 2px solid #217346; margin-top: -1px; line-height: 24px; height: 25px; }
.stab-sep { width: 1px; height: 20px; margin: 2px 0 0 0; background: #9e9e9e; }
.addsheet { margin: 4px 0 0 33px; }
.hscroll { margin-left: auto; display: flex; align-items: center; height: 15px; margin-top: 6px; width: 530px; background: #d9d9d9; }
.grip { width: 20px; height: 15px; background: #e6e6e6; }
.hthumb { width: 444px; height: 15px; background: #fff; border: 1px solid #b4b4b4; }
.hscroll .sb-btn:last-child { margin-left: auto; }

/* status bar */
.status { flex: 1; display: flex; align-items: stretch; padding-left: 8px; background: #f3f2f1; line-height: 22px; }
.macro { margin: 5px 0 0 20px; }
.views { display: flex; margin-left: auto; }
.view { width: 40px; display: flex; align-items: center; justify-content: center; }
.view.act { background: #c6c6c6; }
.zoom { width: 186px; flex: none; display: flex; align-items: center; padding-left: 3px; }
.zm { width: 14px; text-align: center; font-size: 14px; }
.slider { position: relative; width: 100px; height: 1px; margin: 0 2px; background: #9e9e9e; }
.slider span { position: absolute; left: 47px; top: -5px; width: 5px; height: 11px; background: #777; }
.pctv { margin-left: 10px; font-size: 13px; }
```
